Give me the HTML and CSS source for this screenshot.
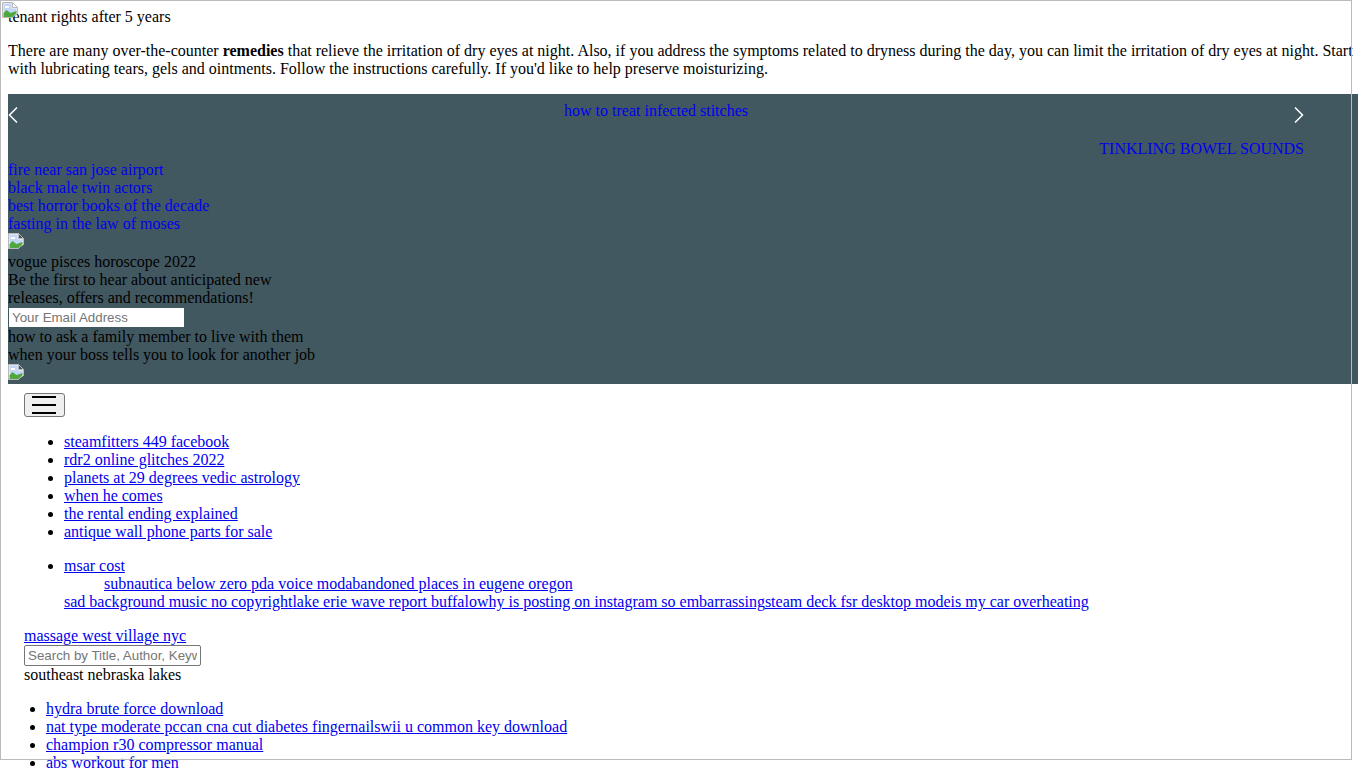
FILE: index.html
```html
<!DOCTYPE html>
<html lang="en">
<head>
<meta charset="utf-8">
<title>tenant rights after 5 years</title>
<link rel="stylesheet" href="styles.css">
</head>
<body>
<div class="frame"></div>
<svg class="broken broken-top" width="16" height="16" viewBox="0 0 16 16"><path d="M.5.5h10l5 5v6l-3 2-2 2H.5z" fill="#f2f2f2" stroke="#b9b9b9"/><path d="M10.5.5v5h5z" fill="#fff" stroke="#b9b9b9"/><path d="M1.5 1.5h8v5h5v3l-4 2-9-2z" fill="#c3d6f7"/><path d="M3 4h4v2H3z" fill="#fff"/><path d="M1.5 15v-4l3-3 4 3 6-2v2l-4 4z" fill="#4fa83f"/></svg>
<div class="title">tenant rights after 5 years</div>
<p class="intro">There are many over-the-counter <b>remedies</b> that relieve the irritation of dry eyes at night. Also, if you address the symptoms related to dryness during the day, you can limit the irritation of dry eyes at night. Start with lubricating tears, gels and ointments. Follow the instructions carefully. If you'd like to help preserve moisturizing.</p>
<section class="band">
  <div class="carousel">
    <svg class="arrow" width="10" height="16" viewBox="0 0 10 16"><path d="M9 .5 1.5 8 9 15.5" fill="none" stroke="#fff" stroke-width="1.5"/></svg>
    <a class="plain" href="#">how to treat infected stitches</a>
    <svg class="arrow" width="10" height="16" viewBox="0 0 10 16"><path d="M1 .5 8.5 8 1 15.5" fill="none" stroke="#fff" stroke-width="1.5"/></svg>
  </div>
  <div class="caps"><a class="plain" href="#">TINKLING BOWEL SOUNDS</a></div>
  <div class="links">
    <a class="plain" href="#">fire near san jose airport</a>
    <a class="plain" href="#">black male twin actors</a>
    <a class="plain" href="#">best horror books of the decade</a>
    <a class="plain" href="#">fasting in the law of moses</a>
  </div>
  <svg class="broken" width="16" height="16" viewBox="0 0 16 16"><path d="M.5.5h10l5 5v6l-3 2-2 2H.5z" fill="#f2f2f2" stroke="#b9b9b9"/><path d="M10.5.5v5h5z" fill="#425860" stroke="#b9b9b9"/><path d="M1.5 1.5h8v5h5v3l-4 2-9-2z" fill="#c3d6f7"/><path d="M3 4h4v2H3z" fill="#fff"/><path d="M1.5 15v-4l3-3 4 3 6-2v2l-4 4z" fill="#4fa83f"/></svg>
  <div class="signup">
    <div>vogue pisces horoscope 2022</div>
    <div class="blurb">Be the first to hear about anticipated new releases, offers and recommendations!</div>
    <input class="email" type="text" placeholder="Your Email Address">
    <div>how to ask a family member to live with them</div>
    <div>when your boss tells you to look for another job</div>
    <svg class="broken" width="16" height="16" viewBox="0 0 16 16"><path d="M.5.5h10l5 5v6l-3 2-2 2H.5z" fill="#f2f2f2" stroke="#b9b9b9"/><path d="M10.5.5v5h5z" fill="#425860" stroke="#b9b9b9"/><path d="M1.5 1.5h8v5h5v3l-4 2-9-2z" fill="#c3d6f7"/><path d="M3 4h4v2H3z" fill="#fff"/><path d="M1.5 15v-4l3-3 4 3 6-2v2l-4 4z" fill="#4fa83f"/></svg>
  </div>
</section>
<main class="content">
  <button class="menu" type="button" aria-label="Menu"><span></span><span></span><span></span></button>
  <ul class="nav">
    <li><a href="#">steamfitters 449 facebook</a></li>
    <li><a href="#">rdr2 online glitches 2022</a></li>
    <li><a href="#">planets at 29 degrees vedic astrology</a></li>
    <li><a href="#">when he comes</a></li>
    <li><a href="#">the rental ending explained</a></li>
    <li><a href="#">antique wall phone parts for sale</a></li>
  </ul>
  <ul class="nav">
    <li><a href="#">msar cost</a>
      <div class="sub"><a href="#">subnautica below zero pda voice mod</a><a href="#">abandoned places in eugene oregon</a></div>
      <div><a href="#">sad background music no copyright</a><a href="#">lake erie wave report buffalo</a><a href="#">why is posting on instagram so embarrassing</a><a href="#">steam deck fsr desktop mode</a><a href="#">is my car overheating</a></div>
    </li>
  </ul>
  <div><a href="#">massage west village nyc</a></div>
  <input class="search" type="text" placeholder="Search by Title, Author, Keyword">
  <div>southeast nebraska lakes</div>
  <ul class="foot">
    <li><a href="#">hydra brute force download</a></li>
    <li><a href="#">nat type moderate pc</a><a href="#">can cna cut diabetes fingernails</a><a href="#">wii u common key download</a></li>
    <li><a href="#">champion r30 compressor manual</a></li>
    <li><a href="#">abs workout for men</a></li>
  </ul>
</main>
</body>
</html>
```
FILE: styles.css
```css
html { overflow: hidden; height: 768px; }
body {
  margin: 8px;
  font-family: "Liberation Serif", "Times New Roman", serif;
  font-size: 16px;
  color: #000;
}
a { color: #00e; }
a.plain { text-decoration: none; display: block; }
.frame {
  position: absolute;
  left: 0;
  top: 0;
  width: 1350px;
  height: 758px;
  border: 1px solid #bbb;
  pointer-events: none;
  z-index: 2;
}
.broken { display: block; }
.broken-top { position: absolute; left: 2px; top: 2px; }
.intro { margin: 16px 0; }
.band { background: #425860; height: 290px; padding-top: 8px; box-sizing: border-box; }
.carousel {
  display: flex;
  justify-content: space-between;
  width: 1296px;
  height: 18px;
  align-items: flex-start;
}
.carousel .arrow { margin-top: 5px; }
.caps { width: 1296px; text-align: right; margin-top: 20px; }
.links { margin-top: 3px; }
.signup { margin-top: 4px; }
.blurb { width: 290px; }
.email {
  display: block;
  box-sizing: border-box;
  width: 177px;
  height: 21px;
  margin: 0;
  padding: 1px 3px;
  border: 1px solid #425860;
  background: #fff;
  font: 13.33px "Liberation Sans", Arial, sans-serif;
}
.content { padding: 9px 16px 0; }
.menu {
  display: flex;
  flex-direction: column;
  justify-content: space-between;
  box-sizing: border-box;
  width: 41px;
  height: 24px;
  padding: 2px 8px 2px 7px;
  background: #efefef;
  border: 1px solid #767676;
  border-radius: 3px;
}
.menu span { display: block; width: 100%; height: 2px; background: #000; }
.nav { margin: 16px 0; padding-left: 40px; }
.sub { padding-left: 40px; }
.search {
  display: block;
  box-sizing: border-box;
  width: 177px;
  height: 21px;
  margin: 0;
  padding: 1px 3px;
  border: 1px solid #767676;
  border-radius: 2px;
  font: 13.33px "Liberation Sans", Arial, sans-serif;
}
.foot { margin: 16px 0; padding-left: 22px; }
```
